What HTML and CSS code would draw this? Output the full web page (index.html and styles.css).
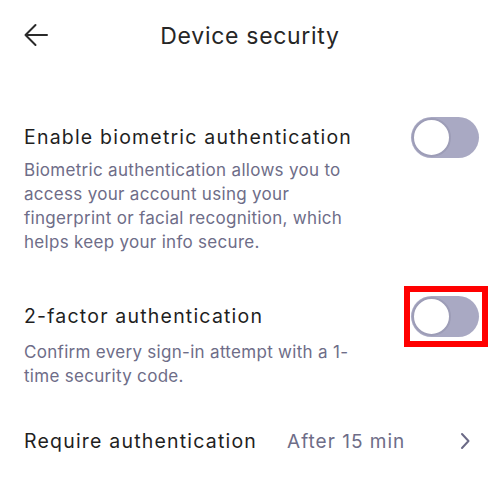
FILE: index.html
```html
<!DOCTYPE html>
<html>
<head>
<meta charset="utf-8">
<link rel="stylesheet" href="styles.css">
</head>
<body>
<div class="screen">
  <header class="topbar">
    <button class="back" aria-label="Back">
      <svg width="26" height="24" viewBox="0 0 26 24"><path d="M24 12H2.5M12.5 2L2.5 12l10 10" fill="none" stroke="#2a2a2a" stroke-width="2" stroke-linecap="round" stroke-linejoin="round"/></svg>
    </button>
    <h1 class="title">Device security</h1>
  </header>

  <section class="setting first">
    <div class="setting-head">
      <h2 class="setting-title">Enable biometric authentication</h2>
      <span class="toggle"><span class="knob"></span></span>
    </div>
    <p class="setting-desc">Biometric authentication allows you to access your account using your fingerprint or facial recognition, which helps keep your info secure.</p>
  </section>

  <section class="setting second">
    <div class="setting-head">
      <h2 class="setting-title">2-factor authentication</h2>
      <span class="toggle highlighted"><span class="knob"></span></span>
    </div>
    <p class="setting-desc">Confirm every sign-in attempt with a 1-time security code.</p>
  </section>

  <div class="row">
    <span class="row-label">Require authentication</span>
    <span class="row-value">After 15 min</span>
    <svg class="chev" width="10" height="18" viewBox="0 0 10 18"><path d="M2 2l6.5 7L2 16" fill="none" stroke="#6b6a86" stroke-width="2" stroke-linecap="round" stroke-linejoin="round"/></svg>
  </div>
</div>
</body>
</html>
```

FILE: styles.css
```css
* { box-sizing: border-box; }
html, body { margin: 0; padding: 0; background: #fff; }
body { font-family: Inter, "Noto Sans", sans-serif; color: #222; }
.screen { width: 500px; height: 484px; overflow: hidden; }

.topbar { position: relative; height: 72px; display: flex; align-items: center; justify-content: center; }
.back { position: absolute; left: 23px; top: 23px; border: 0; background: none; padding: 0; display: flex; }
.title { margin: 0; font-size: 23px; font-weight: 400; letter-spacing: 0.7px; color: #262626; }

.setting { padding: 0 21px 0 24px; }
.first { margin-top: 44px; }
.second { margin-top: 41px; }
.setting-head { display: flex; align-items: center; justify-content: space-between; height: 42px; }
.setting-title { margin: 0; font-size: 19.5px; font-weight: 400; letter-spacing: 1.2px; color: #1f1f1f; }
.setting-desc { margin: 0; width: 330px; font-size: 17px; line-height: 24px; letter-spacing: 0.3px; color: #6e6d88; }
.second .setting-desc { margin-top: 3px; }

.toggle { position: relative; display: block; width: 68px; height: 41px; border-radius: 21px; background: #a9a9c3; }
.knob { position: absolute; left: 1px; top: 1px; width: 39px; height: 39px; border-radius: 50%; background: #fff; border: 2px solid #9d9db7; }
.highlighted::after { content: ""; position: absolute; left: -7px; right: -9px; top: -10px; bottom: -10px; border: 6px solid #f00; }

.row { display: flex; align-items: center; margin-top: 33px; padding: 0 30px 0 24px; height: 40px; }
.row-label { font-size: 19.5px; letter-spacing: 1.2px; color: #1f1f1f; }
.row-value { margin-left: 30px; font-size: 19px; letter-spacing: 1px; color: #6e6d88; }
.chev { margin-left: auto; }
```
